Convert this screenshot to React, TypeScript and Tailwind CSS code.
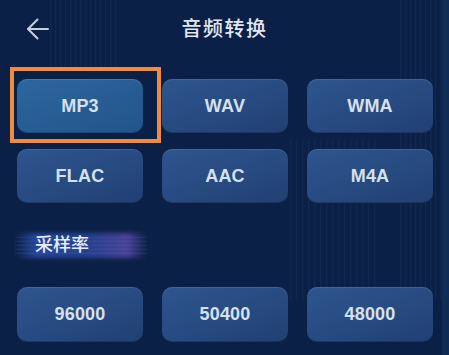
import React from "react";

const formats = ["MP3", "WAV", "WMA", "FLAC", "AAC", "M4A"];
const rates = ["96000", "50400", "48000"];

function Btn({ label, active }: { label: string; active?: boolean }) {
  return (
    <div
      className={
        active
          ? "h-full w-full rounded-[10px] flex items-center justify-center bg-[linear-gradient(160deg,#2d669f_0%,#275c93_55%,#22548a_100%)] shadow-[inset_0_1px_0_rgba(140,190,240,0.25),inset_0_-1px_0_rgba(0,0,0,0.2)]"
          : "h-full w-full rounded-[10px] flex items-center justify-center bg-[linear-gradient(160deg,#2e558e_0%,#274a80_55%,#213f73_100%)] shadow-[inset_0_1px_0_rgba(140,170,230,0.22),inset_0_-1px_0_rgba(0,0,0,0.2)]"
      }
    >
      <span className="text-[18px] font-bold text-[#d6e1ef] tracking-[0.2px]">{label}</span>
    </div>
  );
}

export default function App() {
  return (
    <div
      className="relative w-[449px] h-[355px] overflow-hidden bg-[#0b2046]"
      style={{ fontFamily: '"Liberation Sans", "Noto Sans CJK SC", sans-serif' }}
    >
      {/* decorative streaks */}
      <div className="pointer-events-none absolute left-[50px] top-0 w-[70px] h-[70px] opacity-40 bg-[repeating-linear-gradient(90deg,rgba(60,100,170,0.35)_0px,rgba(60,100,170,0)_2px,rgba(60,100,170,0)_5px)]" />
      <div className="pointer-events-none absolute left-[290px] top-[140px] w-[90px] h-[160px] opacity-40 bg-[repeating-linear-gradient(90deg,rgba(60,100,170,0.35)_0px,rgba(60,100,170,0)_2px,rgba(60,100,170,0)_6px)]" />
      <div className="pointer-events-none absolute left-[400px] top-0 w-[42px] h-[300px] opacity-40 bg-[repeating-linear-gradient(90deg,rgba(60,100,170,0.35)_0px,rgba(60,100,170,0)_2px,rgba(60,100,170,0)_5px)]" />
      <div className="pointer-events-none absolute right-0 top-0 w-[7px] h-full bg-[#0f2b56]" />

      <div className="relative flex flex-col">
        {/* header */}
        <div className="relative h-[58px] flex items-center justify-center">
          <svg
            className="absolute left-[26px] top-[17px]"
            width="24"
            height="24"
            viewBox="0 0 24 24"
            fill="none"
            stroke="#c5cfdd"
            strokeWidth="2"
            strokeLinecap="round"
            strokeLinejoin="round"
          >
            <path d="M22 12H2" />
            <path d="M11.5 2.5L2 12l9.5 9.5" />
          </svg>
          <span className="text-[20px] text-[#e2e8f2] tracking-[1.5px] font-medium">音频转换</span>
        </div>

        {/* formats */}
        <div className="mt-[21px] ml-[17px] w-[416px] grid grid-cols-3 gap-x-[19px] gap-y-[16px] auto-rows-[54px]">
          {formats.map((f, i) => (
            <div key={f} className="relative">
              <Btn label={f} active={i === 0} />
              {i === 0 && (
                <div className="pointer-events-none absolute left-[-7px] top-[-12px] right-[-18px] bottom-[-10px] border-4 border-solid border-[#f18b3d]" />
              )}
            </div>
          ))}
        </div>

        {/* label */}
        <div className="relative mt-[30px] ml-[15px] w-[132px] h-[25px] flex items-center">
          <div className="absolute inset-0 blur-[2px] bg-[linear-gradient(90deg,rgba(45,75,160,0)_0%,rgba(50,85,185,0.7)_15%,rgba(55,85,190,0.6)_55%,rgba(100,80,185,0.7)_85%,rgba(80,60,160,0)_100%)]" />
          <div className="absolute left-0 right-0 top-[4px] bottom-[4px] opacity-40 bg-[repeating-linear-gradient(0deg,rgba(130,150,230,0.3)_0px,rgba(130,150,230,0)_2px,rgba(130,150,230,0)_4px)]" />
          <span className="relative ml-[20px] text-[18px] text-[#e8eef9] font-medium">采样率</span>
        </div>

        {/* rates */}
        <div className="mt-[29px] ml-[17px] w-[416px] grid grid-cols-3 gap-x-[19px] auto-rows-[55px]">
          {rates.map((r) => (
            <Btn key={r} label={r} />
          ))}
        </div>
      </div>
    </div>
  );
}
